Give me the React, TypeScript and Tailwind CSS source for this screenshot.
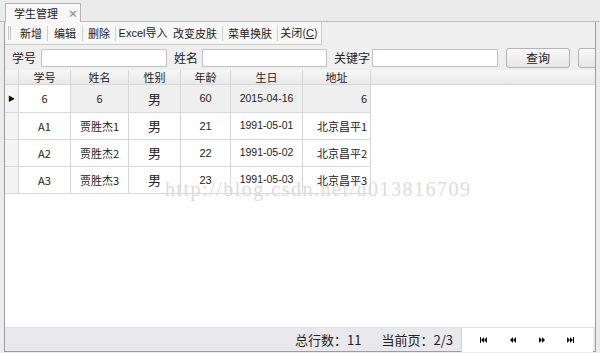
import React from "react"

const cjk = { fontFamily: '"Noto Sans CJK SC", "Liberation Sans", sans-serif' }
const num = { fontFamily: '"Liberation Sans", "Noto Sans CJK SC", sans-serif' }

const rows = [
  { id: "6", name: "6", sex: "男", age: "60", birth: "2015-04-16", addr: "6" },
  { id: "A1", name: "贾胜杰1", sex: "男", age: "21", birth: "1991-05-01", addr: "北京昌平1" },
  { id: "A2", name: "贾胜杰2", sex: "男", age: "22", birth: "1991-05-02", addr: "北京昌平2" },
  { id: "A3", name: "贾胜杰3", sex: "男", age: "23", birth: "1991-05-03", addr: "北京昌平3" },
]

const Sep = () => <div className="w-px h-[15px] bg-[#cfcfcf] mx-[1px] shrink-0" />

const NavIcon = ({ kind }: { kind: "first" | "prev" | "next" | "last" }) => (
  <svg width="8" height="6" viewBox="0 0 8 6" className="fill-[#111]">
    {kind === "first" && (
      <>
        <rect x="0" y="0" width="1" height="6" />
        <polygon points="1,3 4,0 4,6" />
        <polygon points="4,3 7,0 7,6" />
      </>
    )}
    {kind === "prev" && (
      <>
        <polygon points="1,3 4,0 4,6" />
        <polygon points="4,3 7,0 7,6" />
      </>
    )}
    {kind === "next" && (
      <>
        <polygon points="1,0 4,3 1,6" />
        <polygon points="4,0 7,3 4,6" />
      </>
    )}
    {kind === "last" && (
      <>
        <polygon points="0,0 3,3 0,6" />
        <polygon points="3,0 6,3 3,6" />
        <rect x="6" y="0" width="1" height="6" />
      </>
    )}
  </svg>
)

export default function App() {
  return (
    <div className="w-[600px] h-[353px] bg-[#ebebeb] flex flex-col text-[#222] overflow-hidden" style={cjk}>
      {/* tab strip */}
      <div className="h-[22px] flex items-end pl-[5px] border-b border-[#bdbdbd] shrink-0">
        <div className="h-[19px] w-[76px] bg-[#f7f7f7] border border-b-0 border-[#b5b5b5] flex items-center pl-[8px] gap-[10px] text-[11px] -mb-px whitespace-nowrap">
          <span>学生管理</span>
          <span className="text-[#888] text-[10px] font-bold">×</span>
        </div>
      </div>

      <div className="flex-1 mx-[4px] mb-[1px] border-l border-r border-b border-[#9c9c9c] flex flex-col bg-[#efefef] min-h-0">
        {/* toolbar */}
        <div className="h-[23px] flex shrink-0">
          <div className="w-[317px] bg-[#f7f7f7] border-r border-b border-[#cdcdcd] flex items-center text-[11px] pl-[3px] whitespace-nowrap overflow-hidden">
            <div className="flex gap-[1px] mr-[5px] shrink-0">
              <div className="w-px h-[14px] bg-[#c4c4c4]" />
              <div className="w-px h-[14px] bg-[#c4c4c4]" />
            </div>
            <span className="w-[30px] text-center shrink-0">新增</span>
            <Sep />
            <span className="w-[32px] text-center shrink-0">编辑</span>
            <Sep />
            <span className="w-[30px] text-center shrink-0">删除</span>
            <Sep />
            <span className="w-[52px] text-center shrink-0"><span style={num}>Excel</span>导入</span>
            <span className="w-[52px] text-center shrink-0">改变皮肤</span>
            <Sep />
            <span className="w-[52px] text-center shrink-0">菜单换肤</span>
            <Sep />
            <span className="w-[40px] text-center shrink-0">关闭(<span className="underline" style={num}>C</span>)</span>
          </div>
        </div>

        {/* search row */}
        <div className="h-[25px] flex items-center text-[12px] shrink-0 overflow-hidden whitespace-nowrap">
          <span className="ml-[7px] w-[29px] shrink-0">学号</span>
          <div className="w-[126px] h-[18px] bg-white border border-[#c3c3c3] shrink-0" />
          <span className="ml-[7px] w-[28px] shrink-0">姓名</span>
          <div className="w-[125px] h-[18px] bg-white border border-[#c3c3c3] shrink-0" />
          <span className="ml-[7px] w-[38px] shrink-0">关键字</span>
          <div className="w-[126px] h-[18px] bg-white border border-[#c3c3c3] shrink-0" />
          <div className="ml-[8px] w-[64px] h-[20px] shrink-0 rounded-[3px] border border-[#b4b4b4] bg-gradient-to-b from-[#f8f8f8] to-[#e6e6e6] flex items-center justify-center">
            查询
          </div>
          <div className="ml-[8px] w-[64px] h-[20px] shrink-0 rounded-[3px] border border-[#b4b4b4] bg-gradient-to-b from-[#f8f8f8] to-[#e6e6e6]" />
        </div>

        {/* grid */}
        <div className="flex-1 bg-white relative flex flex-col text-[11px] min-h-0">
          <div className="h-[15px] flex bg-gradient-to-b from-[#f6f6f6] to-[#e9e9e9] border-b border-[#d6d6d6] shrink-0 leading-[14px]">
            <div className="w-[14px] border-r border-[#d6d6d6]" />
            <div className="w-[52px] border-r border-[#d6d6d6] text-center">学号</div>
            <div className="w-[58px] border-r border-[#d6d6d6] text-center">姓名</div>
            <div className="w-[52px] border-r border-[#d6d6d6] text-center">性别</div>
            <div className="w-[50px] border-r border-[#d6d6d6] text-center">年龄</div>
            <div className="w-[72px] border-r border-[#d6d6d6] text-center">生日</div>
            <div className="w-[68px] border-r border-[#d6d6d6] text-center">地址</div>
          </div>
          {rows.map((r, i) => (
            <div
              key={r.id}
              className={`flex w-[366px] border-b border-[#dadada] shrink-0 ${i === 0 ? "h-[28px] bg-[#efefef]" : "h-[27px]"}`}
            >
              <div className="w-[14px] border-r border-[#d6d6d6] bg-[#f4f4f4] flex items-center justify-center">
                {i === 0 && <span className="text-[7px] text-black">▶</span>}
              </div>
              <div className={`w-[52px] border-r border-[#d6d6d6] flex items-center justify-center ${i === 0 ? "bg-white" : ""}`}>{r.id}</div>
              <div className="w-[58px] border-r border-[#d6d6d6] flex items-center justify-center">{r.name}</div>
              <div className="w-[52px] border-r border-[#d6d6d6] flex items-center justify-center text-[13px]">{r.sex}</div>
              <div className="w-[50px] border-r border-[#d6d6d6] flex items-center justify-center" style={num}>{r.age}</div>
              <div className="w-[72px] border-r border-[#d6d6d6] flex items-center justify-center text-[10.5px]" style={num}>{r.birth}</div>
              <div className="w-[68px] border-r border-[#d6d6d6] flex items-center justify-end pr-[3px]">{r.addr}</div>
            </div>
          ))}
          <div
            className="absolute left-[160px] top-[104px] text-[20px] tracking-[1.5px] text-[#dcdcdc] whitespace-nowrap pointer-events-none"
            style={{ fontFamily: '"Liberation Serif", serif' }}
          >
            http://blog.csdn.net/u013816709
          </div>
        </div>

        {/* status bar */}
        <div className="h-[24px] flex items-center bg-[#e9e9ed] text-[13px] shrink-0 border-t border-[#e2e2e2] whitespace-nowrap">
          <span className="ml-[290px]">总行数：11</span>
          <span className="ml-[20px]">当前页：2/3</span>
          <div className="ml-auto mr-[2px] w-[132px] h-[24px] bg-white border-l border-[#d0d0d0] flex items-center justify-around px-[8px]">
            <NavIcon kind="first" />
            <NavIcon kind="prev" />
            <NavIcon kind="next" />
            <NavIcon kind="last" />
          </div>
        </div>
      </div>
    </div>
  )
}
